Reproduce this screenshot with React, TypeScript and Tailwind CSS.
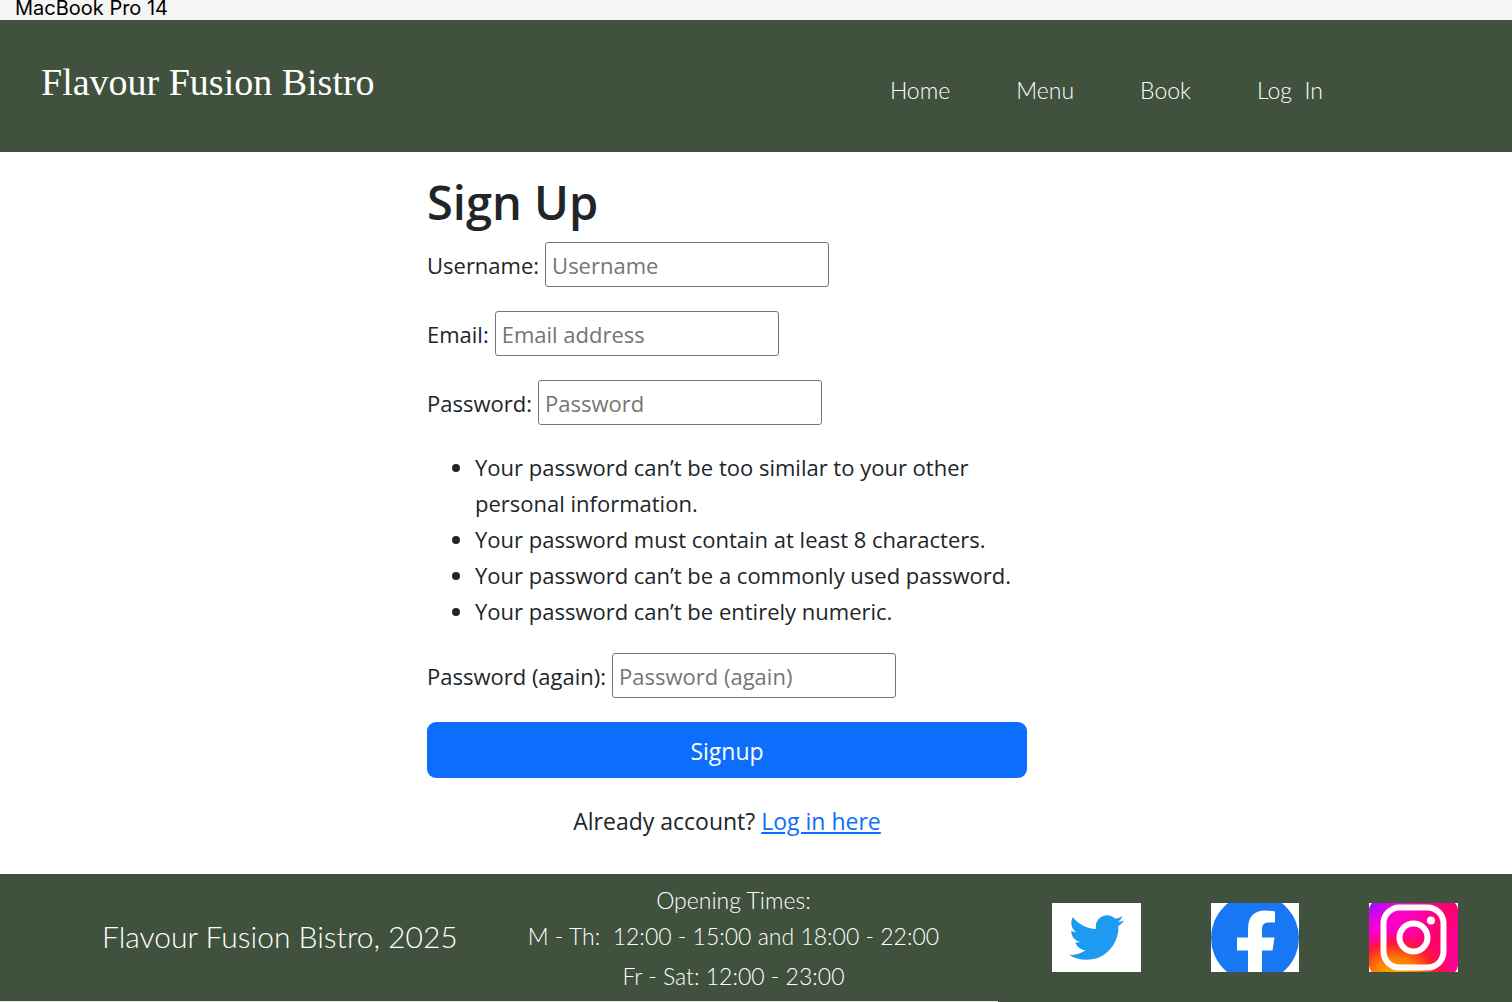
import React from "react";
import { FaTwitter } from "react-icons/fa";

const navLinks = ["Home", "Menu", "Book", "Log \u00a0In"];

const passwordRules = [
  "Your password can’t be too similar to your other personal information.",
  "Your password must contain at least 8 characters.",
  "Your password can’t be a commonly used password.",
  "Your password can’t be entirely numeric.",
];

type FieldProps = { id: string; label: string; placeholder: string; type: string };

function Field({ id, label, placeholder, type }: FieldProps) {
  return (
    <div className="flex items-center gap-1.5">
      <label htmlFor={id}>{label}</label>
      <input
        id={id}
        type={type}
        placeholder={placeholder}
        className="h-[45px] w-[284px] rounded-[3px] border border-[#767676] bg-white px-1.5 placeholder:text-[#757575]"
      />
    </div>
  );
}

function FacebookLogo() {
  return (
    <svg viewBox="0 0 88 69" className="h-[69px] w-[88px] bg-white" aria-hidden="true">
      <circle cx="44" cy="35" r="44" fill="#1877f2" />
      <path
        d="M37 69V47.500H26V34.500H37V26C37 14 43 7.500 54 7.500C58 7.500 61 8 64 8.500V19.500H58C53 19.500 51 22 51 26V34.500H63.500L61.500 47.500H51V69Z"
        fill="#fff"
      />
    </svg>
  );
}

function InstagramLogo() {
  return (
    <svg viewBox="0 0 89 69" className="h-[69px] w-[89px] bg-white" aria-hidden="true">
      <defs>
        <linearGradient id="ig-base" x1="0" y1="0" x2="1" y2="0.3">
          <stop offset="0" stopColor="#f000e0" />
          <stop offset="0.45" stopColor="#ff00c0" />
          <stop offset="0.85" stopColor="#ff0068" />
          <stop offset="1" stopColor="#ff0090" />
        </linearGradient>
        <radialGradient id="ig-violet" cx="0" cy="0" r="0.35">
          <stop offset="0" stopColor="#8a10ff" />
          <stop offset="1" stopColor="#d400ff" stopOpacity="0" />
        </radialGradient>
        <radialGradient id="ig-warm" cx="0.3" cy="1.05" r="0.7">
          <stop offset="0" stopColor="#ffb000" />
          <stop offset="0.35" stopColor="#ff8000" />
          <stop offset="0.65" stopColor="#ff1a30" />
          <stop offset="1" stopColor="#ff0080" stopOpacity="0" />
        </radialGradient>
      </defs>
      <rect width="89" height="69" fill="url(#ig-base)" />
      <rect width="89" height="69" fill="url(#ig-violet)" />
      <rect width="89" height="69" fill="url(#ig-warm)" />
      <path d="M0 0H3Q1 2 0 6ZM89 0H86Q88 2 89 6ZM0 69H3Q1 67 0 63ZM89 69H86Q88 67 89 63Z" fill="#fff" />
      <rect x="14.500" y="4.500" width="60" height="60" rx="16" fill="none" stroke="#fff" strokeWidth="6" />
      <circle cx="44.500" cy="34.500" r="14" fill="none" stroke="#fff" strokeWidth="6" />
      <circle cx="62" cy="17.500" r="4" fill="#fff" />
    </svg>
  );
}

export default function App() {
  return (
    <div className="flex min-h-screen flex-col bg-white font-['Open_Sans',sans-serif] text-[#212529]">
      <div className="h-5 bg-[#f5f5f5] px-[15px] font-['Inter',sans-serif] text-[20px] leading-4 text-black">
        MacBook Pro 14
      </div>

      <header className="flex h-[132px] items-center justify-between bg-[#40513e] pr-[189px] pl-[41px] text-white">
        <h1 className="pb-2 font-['Liberation_Serif',serif] text-[38px] leading-[44px]">Flavour Fusion Bistro</h1>
        <nav className="flex gap-[66px] pt-2 font-['Lato',sans-serif] text-[23px] leading-8 font-light">
          {navLinks.map((link) => (
            <a key={link} href="#">
              {link}
            </a>
          ))}
        </nav>
      </header>

      <main className="flex flex-1 justify-center pt-5 pr-[58px]">
        <form className="w-[600px] text-[22px] leading-9" onSubmit={(e) => e.preventDefault()}>
          <h2 className="mb-2.5 text-[47px] leading-[60px] font-semibold">Sign Up</h2>
          <div className="flex flex-col gap-6">
            <Field id="username" label="Username:" placeholder="Username" type="text" />
            <Field id="email" label="Email:" placeholder="Email address" type="email" />
            <Field id="password" label="Password:" placeholder="Password" type="password" />
            <ul className="list-disc pl-12">
              {passwordRules.map((rule) => (
                <li key={rule}>{rule}</li>
              ))}
            </ul>
            <Field id="password-again" label="Password (again):" placeholder="Password (again)" type="password" />
            <button type="submit" className="h-14 w-full rounded-[9px] bg-[#0d6efd] pt-0.5 text-[23px] text-white">
              Signup
            </button>
          </div>
          <p className="mt-[25px] text-center text-[23px]">
            Already account?{" "}
            <a href="#" className="text-[#0d6efd] underline">
              Log in here
            </a>
          </p>
        </form>
      </main>

      <footer className="flex h-32 flex-col bg-[#40513e] font-['Lato',sans-serif] font-light text-white">
        <div className="flex flex-1 items-center pr-[54px] pl-[102px]">
          <p className="pb-1 text-[30px] leading-10">Flavour Fusion Bistro, 2025</p>
          <div className="mr-auto ml-[70px] flex flex-col items-center text-[23px] leading-9">
            <p>Opening Times:</p>
            <p>M - Th: &nbsp;12:00 - 15:00 and 18:00 - 22:00</p>
            <p className="mt-1">Fr - Sat: 12:00 - 23:00</p>
          </div>
          <div className="flex gap-[70px]">
            <a href="#" aria-label="Twitter" className="flex h-[69px] w-[89px] items-center justify-center bg-white">
              <FaTwitter className="size-[55px] text-[#1d9bf0]" />
            </a>
            <a href="#" aria-label="Facebook">
              <FacebookLogo />
            </a>
            <a href="#" aria-label="Instagram">
              <InstagramLogo />
            </a>
          </div>
        </div>
        <div className="h-px w-[66%] bg-[#e8ebe8]" />
      </footer>
    </div>
  );
}
